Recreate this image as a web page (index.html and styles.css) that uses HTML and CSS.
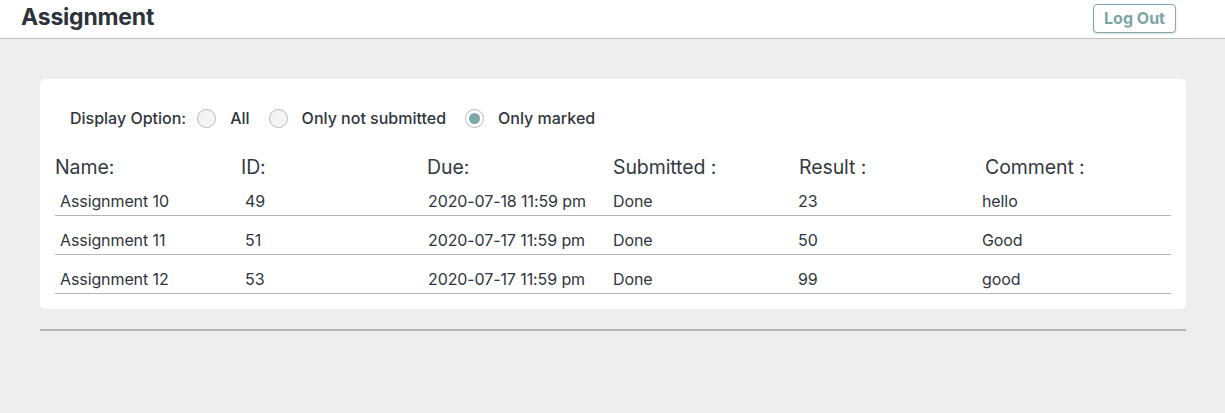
FILE: index.html
```html
<!DOCTYPE html>
<html>
<head>
<meta charset="utf-8">
<link rel="stylesheet" href="styles.css">
</head>
<body>
<header class="topbar">
  <h1 class="title">Assignment</h1>
  <button class="logout">Log Out</button>
</header>
<main class="main">
  <section class="card">
    <div class="options">
      <span class="opt-label">Display Option:</span>
      <label class="opt"><span class="radio"></span>All</label>
      <label class="opt"><span class="radio"></span>Only not submitted</label>
      <label class="opt"><span class="radio checked"></span>Only marked</label>
    </div>
    <div class="table">
      <div class="row head">
        <div>Name:</div><div>ID:</div><div>Due:</div><div>Submitted :</div><div>Result :</div><div>Comment :</div>
      </div>
      <div class="row data">
        <div class="c1">Assignment 10</div><div class="c2">49</div><div class="c3">2020-07-18 11:59 pm</div><div class="c4">Done</div><div class="c5">23</div><div class="c6">hello</div>
      </div>
      <div class="row data">
        <div class="c1">Assignment 11</div><div class="c2">51</div><div class="c3">2020-07-17 11:59 pm</div><div class="c4">Done</div><div class="c5">50</div><div class="c6">Good</div>
      </div>
      <div class="row data">
        <div class="c1">Assignment 12</div><div class="c2">53</div><div class="c3">2020-07-17 11:59 pm</div><div class="c4">Done</div><div class="c5">99</div><div class="c6">good</div>
      </div>
    </div>
  </section>
  <hr class="rule">
</main>
</body>
</html>
```
FILE: styles.css
```css
* { box-sizing: border-box; }
html, body { margin: 0; padding: 0; }
body {
  background: #eeeeee;
  font-family: Inter, "Liberation Sans", sans-serif;
  color: #2f363d;
  height: 413px;
}
.topbar {
  height: 39px;
  background: #fff;
  border-bottom: 1px solid #bdbdbd;
  display: flex;
  align-items: center;
  justify-content: space-between;
  padding: 0 49px 0 21px;
}
.title {
  margin: 0;
  font-size: 23px;
  font-weight: 700;
  color: #2c333a;
  letter-spacing: -0.2px;
  position: relative;
  top: -2px;
}
.logout {
  height: 29px;
  width: 83px;
  border: 1px solid #7fa8a8;
  border-radius: 4px;
  background: #fff;
  color: #7ba5a6;
  font-family: inherit;
  font-size: 16px;
  font-weight: 700;
  box-shadow: 0 1px 2px rgba(0,0,0,0.15);
  padding: 0;
  position: relative;
  top: -1px;
}
.main {
  padding: 40px 39px 0 40px;
}
.card {
  background: #fff;
  border-radius: 5px;
  padding: 28px 15px 15px 15px;
  height: 230px;
}
.options {
  display: flex;
  align-items: center;
  padding-left: 15px;
  font-size: 16px;
  font-weight: 500;
  color: #2f363d;
  height: 22px;
}
.opt-label { margin-right: 11px; }
.opt {
  display: flex;
  align-items: center;
  margin-right: 19px;
}
.radio {
  width: 19px;
  height: 19px;
  border-radius: 50%;
  border: 1px solid #b8b8b8;
  background: #f4f4f4;
  margin-right: 14px;
  position: relative;
}
.radio.checked { background: #fff; }
.radio.checked::after {
  content: "";
  position: absolute;
  left: 3px; top: 3px;
  width: 11px; height: 11px;
  border-radius: 50%;
  background: #7fa8a8;
}
.table { margin-top: 26px; }
.row {
  display: grid;
  grid-template-columns: repeat(6, 186px);
}
.head {
  font-size: 19.5px;
  color: #333a40;
  height: 22px;
  align-items: center;
  letter-spacing: -0.1px;
}
.data {
  height: 39px;
  border-bottom: 1px solid #b5b5b5;
  font-size: 16px;
  color: #2f363d;
  align-items: center;
  padding-top: 10px;
  letter-spacing: -0.1px;
}
.c1 { padding-left: 5px; }
.c2 { padding-left: 4px; }
.c3 { padding-left: 1px; }
.c5 { margin-left: -1px; }
.c6 { margin-left: -3px; }
.rule {
  margin: 20px 0 0 0;
  border: 0;
  height: 2px;
  background: #b5b5b5;
}
```
